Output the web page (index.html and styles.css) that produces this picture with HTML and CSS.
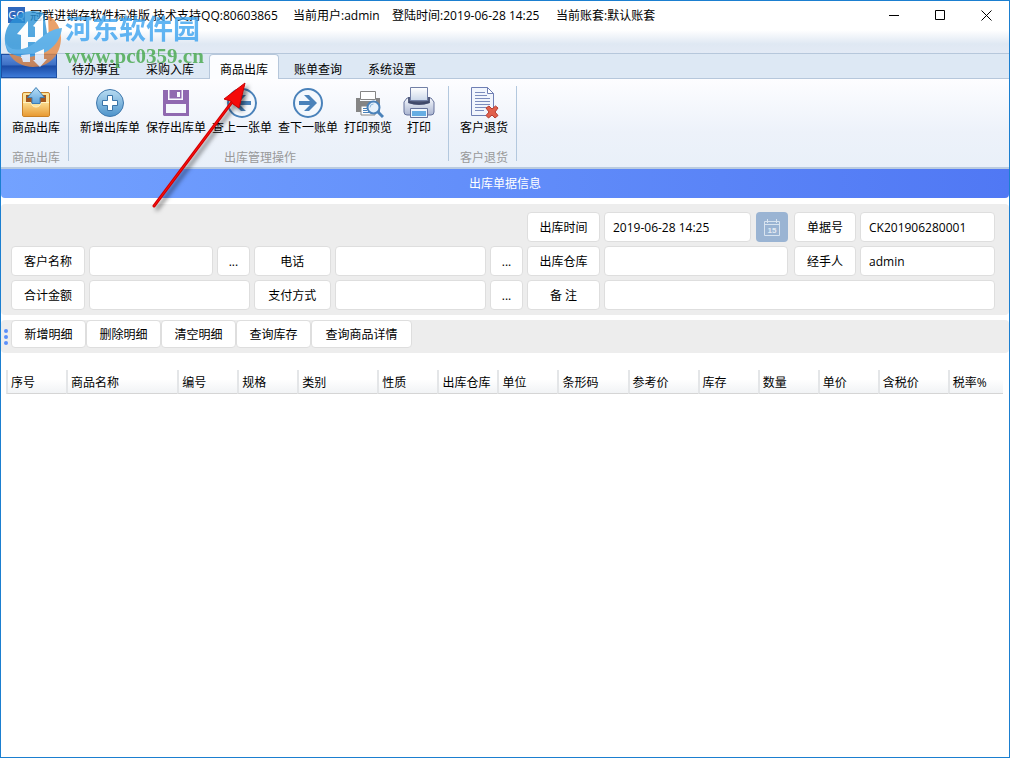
FILE: index.html
```
<!DOCTYPE html>
<html lang="zh-CN">
<head>
<meta charset="utf-8">
<meta name="viewport" content="width=device-width, initial-scale=1">
<title>冠群进销存软件标准版</title>
<link rel="stylesheet" href="styles.css">
</head>
<body>
<div class="window">
  <header class="titlebar">
    <span class="app-icon">GQ</span>
    <div class="title-info">
      <span class="title-name">冠群进销存软件标准版 技术支持QQ:80603865</span>
      <span class="title-user">当前用户:admin</span>
      <span class="title-time">登陆时间:2019-06-28 14:25</span>
      <span>当前账套:默认账套</span>
    </div>
    <div class="window-controls">
      <button class="control" aria-label="最小化"><svg width="11" height="11" viewBox="0 0 11 11"><path d="M0 5.5h10" stroke="#000"/></svg></button>
      <button class="control" aria-label="最大化"><svg width="11" height="11" viewBox="0 0 11 11"><path d="M.5.5h9v9h-9z" fill="none" stroke="#000"/></svg></button>
      <button class="control" aria-label="关闭"><svg width="11" height="11" viewBox="0 0 11 11"><path d="M.5.5l10 10M10.500.5l-10 10" stroke="#000"/></svg></button>
    </div>
  </header>

  <nav class="tabs">
    <button class="app-menu" aria-label="应用菜单"></button>
    <button class="tab">待办事宜</button>
    <button class="tab">采购入库</button>
    <button class="tab tab-active">商品出库</button>
    <button class="tab">账单查询</button>
    <button class="tab">系统设置</button>
  </nav>

  <section class="ribbon">
    <div class="group">
      <div class="items">
        <button class="item">
          <svg class="icon" viewBox="0 0 32 32">
            <defs>
              <linearGradient id="box" x2="0" y2="1"><stop offset="0" stop-color="#fbdc8e"/><stop offset="1" stop-color="#e89a33"/></linearGradient>
              <linearGradient id="up" x2="0" y2="1"><stop offset="0" stop-color="#b9e0f7"/><stop offset="1" stop-color="#5ea2d8"/></linearGradient>
            </defs>
            <rect x="2.500" y="5.500" width="27" height="24" rx="1.500" fill="#fbe29b" stroke="#c98126"/>
            <path d="M6 8h20v8H6z" fill="#a3561c"/>
            <path d="M3 15.500h8c1 6 9 6 10 0h8V29H3z" fill="url(#box)"/>
            <path d="M3 15.500h8c1 6 9 6 10 0h8" fill="none" stroke="#fff2c4"/>
            <path d="M16 .5l8.500 10H20v6h-8v-6H7.500z" fill="url(#up)" stroke="#3f7fb5"/>
          </svg>
          <span>商品出库</span>
        </button>
      </div>
      <div class="caption">商品出库</div>
    </div>
    <div class="group">
      <div class="items">
        <button class="item">
          <svg class="icon" viewBox="0 0 32 32">
            <defs><linearGradient id="add" x2="0" y2="1"><stop offset="0" stop-color="#b8dcf2"/><stop offset="1" stop-color="#4d93ca"/></linearGradient></defs>
            <circle cx="16" cy="16" r="13.500" fill="url(#add)" stroke="#3f78ad"/>
            <path d="M13.500 8.500h5v5h5v5h-5v5h-5v-5h-5v-5h5z" fill="#fff" stroke="#3a74a8"/>
          </svg>
          <span>新增出库单</span>
        </button>
        <button class="item">
          <svg class="icon" viewBox="0 0 32 32">
            <path d="M3 3h26v26H4l-1-1z" fill="#9069b0"/>
            <path d="M8 2h1.500v9.500h12V2H23v11H8z" fill="#f8fafe"/>
            <path d="M17 5h3v5h-3z" fill="#f8fafe"/>
            <path d="M6 17h20v9H6z" fill="#f5f8fc"/>
          </svg>
          <span>保存出库单</span>
        </button>
        <button class="item">
          <svg class="icon" viewBox="0 0 32 32">
            <circle cx="16" cy="16" r="14" fill="#f4f8fd" stroke="#4a82ba" stroke-width="2"/>
            <path d="M7 16l8-8h5l-6 6h11v4H14l6 6h-5z" fill="#4a82ba"/>
          </svg>
          <span>查上一张单</span>
        </button>
        <button class="item">
          <svg class="icon" viewBox="0 0 32 32">
            <circle cx="16" cy="16" r="14" fill="#f4f8fd" stroke="#4a82ba" stroke-width="2"/>
            <path d="M25 16l-8-8h-5l6 6H7v4h11l-6 6h5z" fill="#4a82ba"/>
          </svg>
          <span>查下一账单</span>
        </button>
        <button class="item">
          <svg class="icon" viewBox="0 0 32 32">
            <path d="M4 11h4v3h16v-3h4v14H4z" fill="#858585"/>
            <path d="M8.500 4.500h15v8h-15z" fill="#fff" stroke="#858585"/>
            <path d="M9 19h14v9H9z" fill="#fff" stroke="#858585"/>
            <path d="M11 21.500h5M11 23.500h4M11 25.500h6" stroke="#4a82ba"/>
            <path d="M26 25l5 5" stroke="#4a82ba" stroke-width="3"/>
            <circle cx="21.500" cy="20.500" r="6" fill="#e6f1fb" stroke="#4a82ba" stroke-width="2"/>
            <path d="M18 20.500a3.500 3.500 0 0 1 3.500-3.500" fill="none" stroke="#8db9df"/>
          </svg>
          <span>打印预览</span>
        </button>
        <button class="item">
          <svg class="icon" viewBox="0 0 32 32">
            <defs>
              <linearGradient id="paper" x2="0" y2="1"><stop offset="0" stop-color="#fff"/><stop offset="1" stop-color="#cbd8ea"/></linearGradient>
              <linearGradient id="body" x2="0" y2="1"><stop offset="0" stop-color="#f5f8fd"/><stop offset="1" stop-color="#a9b4d0"/></linearGradient>
            </defs>
            <path d="M4 11h24l3 4v10q0 3-3 3H4q-3 0-3-3V15z" fill="url(#body)" stroke="#66739c"/>
            <path d="M5 10h22v6q-11 4-22 0z" fill="#535d7d"/>
            <path d="M7.500.5h17v13h-17z" fill="url(#paper)" stroke="#7280a6"/>
            <path d="M6 15q10 3 20 0" fill="none" stroke="#3f486a" stroke-width="2"/>
            <path d="M7.500 21.500h17v9h-17z" fill="#eff7fe" stroke="#66739c"/>
            <path d="M9 24h14v5H9z" fill="#65ade3"/>
          </svg>
          <span>打印</span>
        </button>
      </div>
      <div class="caption">出库管理操作</div>
    </div>
    <div class="group">
      <div class="items">
        <button class="item">
          <svg class="icon" viewBox="0 0 32 32">
            <path d="M3.500.5h16l6 6v22h-22z" fill="#f1f5fd" stroke="#6f7fb4"/>
            <path d="M19.500.5v6h6z" fill="#fff" stroke="#6f7fb4"/>
            <path d="M7 5.500h10M7 8.500h12M7 11.500h15M7 14.500h15M7 17.500h15M7 20.500h11M7 23.500h9" stroke="#7c8cbd"/>
            <path d="M18 21l3-2 3 3 3.500-3 2.500 2-3 4 3 3.500-3 2.500-3-3-3.500 3-2.500-2.500 3-3.500z" fill="#e1604c" stroke="#b43c30"/>
          </svg>
          <span>客户退货</span>
        </button>
      </div>
      <div class="caption">客户退货</div>
    </div>
  </section>

  <h1 class="banner">出库单据信息</h1>

  <form class="form">
    <label class="box label time-label" for="time">出库时间</label>
    <input class="box" id="time" value="2019-06-28 14:25">
    <button type="button" class="calendar" aria-label="选择日期">
      <svg width="16" height="17" viewBox="0 0 16 17"><path d="M.5 2.500h15v14H.5zM.5 5.500h15M3.500 0v4M12.500 0v4" fill="none" stroke="#d8e4f0"/><text class="calendar-day" x="8" y="14" text-anchor="middle">15</text></svg>
    </button>
    <label class="box label short-label" for="number">单据号</label>
    <input class="box" id="number" value="CK201906280001">

    <label class="box label first" for="customer">客户名称</label>
    <input class="box" id="customer">
    <button type="button" class="box more">...</button>
    <label class="box label" for="phone">电话</label>
    <input class="box" id="phone">
    <button type="button" class="box more">...</button>
    <label class="box label" for="store">出库仓库</label>
    <input class="box span-2" id="store">
    <label class="box label short-label" for="handler">经手人</label>
    <input class="box" id="handler" value="admin">

    <label class="box label first" for="total">合计金额</label>
    <input class="box span-2" id="total">
    <label class="box label" for="payment">支付方式</label>
    <input class="box" id="payment">
    <button type="button" class="box more">...</button>
    <label class="box label" for="remark">备 注</label>
    <input class="box span-4" id="remark">
  </form>

  <div class="toolbar">
    <svg class="grip" width="6" height="18" viewBox="0 0 6 18"><g fill="#5b8ff9"><circle cx="3" cy="3" r="2"/><circle cx="3" cy="9" r="2"/><circle cx="3" cy="15" r="2"/></g></svg>
    <button class="box tool">新增明细</button>
    <button class="box tool">删除明细</button>
    <button class="box tool">清空明细</button>
    <button class="box tool">查询库存</button>
    <button class="box tool tool-wide">查询商品详情</button>
  </div>

  <main class="details">
    <table class="table">
      <colgroup>
        <col class="w60"><col class="w111"><col class="w60"><col class="w60"><col class="w80"><col class="w60"><col class="w60"><col class="w60"><col class="w70"><col class="w70"><col class="w60"><col class="w60"><col class="w60"><col class="w70"><col class="w55">
      </colgroup>
      <thead>
        <tr><th>序号</th><th>商品名称</th><th>编号</th><th>规格</th><th>类别</th><th>性质</th><th>出库仓库</th><th>单位</th><th>条形码</th><th>参考价</th><th>库存</th><th>数量</th><th>单价</th><th>含税价</th><th>税率%</th></tr>
      </thead>
    </table>
  </main>

  <div class="watermark">
    <svg width="58" height="60" viewBox="0 0 58 60">
      <path d="M29 1A28 28 0 0 0 4 42L12 46 44 30 40 3Q35 1 29 1z" fill="#2b93d8"/>
      <path d="M44 5A28 28 0 0 1 57 28C57 44 46 57 29 57 19 57 10 52 5 44L30 46 45 34z" fill="#e68a45"/>
      <path d="M13 24L24 11v37h-7V25zM29 16L39 4v34h-8V17z" fill="#fff"/>
      <path d="M22 27h10v5H22z" fill="#fff"/>
      <path d="M1 30Q4 42 18 39C34 36 38 20 58 18 56 34 44 45 25 47 11 48 2 43 1 30z" fill="#42a4e6"/>
      <path d="M17 45l9-1v8h-7zM31 43l9-4v10h3l-7 8-7-7h2z" fill="#fff"/>
    </svg>
    <div>
      <div class="watermark-name">河东软件园</div>
      <div class="watermark-url">www.pc0359.cn</div>
    </div>
  </div>

  <svg class="pointer" width="110" height="136" viewBox="0 0 110 136">
    <path d="M6 126L84 22" stroke="#d40000" stroke-width="3" stroke-linecap="round"/>
    <path d="M6 126L84 22" stroke="#ff1010" stroke-width="1" stroke-linecap="round"/>
    <path d="M97 3L76 19l7 2 2 3 6 4z" fill="#f50a0a" stroke="#c00"/>
  </svg>
</div>
</body>
</html>
```
FILE: styles.css
```
* {
  box-sizing: border-box;
}

body {
  margin: 0;
  color: #000;
  font: 12px/16px "Open Sans", "Noto Sans CJK SC", sans-serif;
}

button,
input {
  margin: 0;
  padding: 0;
  border: 0;
  background: none;
  color: inherit;
  font: inherit;
}

.window {
  position: relative;
  display: flex;
  flex-direction: column;
  min-height: 100vh;
  border: 1px solid #1b7fd0;
  background: #fff;
}

/* Title bar */
.titlebar {
  display: flex;
  align-items: flex-start;
  height: 52px;
  padding-left: 7px;
  background: linear-gradient(#fff 29px, #dfe8f3 43px, #e3eaf5);
}

.app-icon {
  width: 17px;
  height: 16px;
  margin: 6px 5px 0 0;
  background: #2f68bd;
  color: #fff;
  font-size: 11px;
  text-align: center;
}

.title-info {
  display: flex;
  flex: 1;
  padding-top: 7px;
  white-space: nowrap;
}

.title-name {
  width: 263px;
}

.title-user {
  width: 99px;
}

.title-time {
  width: 164px;
}

.window-controls {
  display: flex;
}

.control {
  display: flex;
  align-items: center;
  justify-content: center;
  width: 46px;
  height: 28px;
}

/* Tabs */
.tabs {
  display: flex;
  gap: 4px;
  height: 26px;
  border-top: 1px solid #b6c7db;
  border-bottom: 1px solid #b6c7db;
  background: #dde8f4;
}

.app-menu {
  width: 56px;
  height: 24px;
  border: 1px solid #1c4fa5;
  background: linear-gradient(#5f8fdc, #3c6fc4 45%, #1a4aa5 50%, #3d7bd8);
}

.tab {
  width: 70px;
  height: 25px;
  padding-top: 5px;
  border: 1px solid transparent;
  border-bottom: 0;
}

.tab-active {
  border-color: #b6c7db;
  border-radius: 4px 4px 0 0;
  background: #fcfdff;
}

/* Ribbon */
.ribbon {
  display: flex;
  padding: 7px 0 6px;
  border-bottom: 2px solid #b9cbe0;
  background: linear-gradient(#fdfdff, #edf2fa 60%, #e9f0f9);
}

.group {
  display: flex;
  flex-direction: column;
  justify-content: space-between;
  height: 75px;
  padding: 0 5px 0 8px;
  border-right: 1px solid #b3c8de;
}

.items {
  display: flex;
}

.item {
  display: flex;
  flex-direction: column;
  align-items: center;
  gap: 1px;
  min-width: 48px;
  padding: 1px 3px 0;
  white-space: nowrap;
}

.icon {
  width: 32px;
  height: 32px;
}

.caption {
  height: 13px;
  color: #999;
  line-height: 19px;
  text-align: center;
}

/* Document banner */
.banner {
  margin: 0;
  border-radius: 0 0 4px 4px;
  background: linear-gradient(90deg, #73a2ff, #5078f4);
  color: #fff;
  font-size: 12px;
  font-weight: 400;
  line-height: 29px;
  text-align: center;
}

/* Form */
.box {
  min-width: 0;
  padding-top: 2px;
  border: 1px solid #dedede;
  border-radius: 4px;
  background: #fff;
}

.form {
  display: grid;
  grid-template-columns:
    74px minmax(0, 123fr) 33px 77px minmax(0, 150fr) 33px
    73px minmax(0, 146fr) 33px 64px minmax(0, 134fr);
  grid-auto-rows: 30px;
  gap: 4px;
  margin-top: 6px;
  padding: 8px 14px 5px 10px;
  border-radius: 4px;
  background: #ededed;
}

.form input {
  width: 100%;
  padding: 2px 8px 0;
}

.label {
  display: flex;
  align-items: center;
  justify-content: center;
  white-space: pre;
}

.first {
  grid-column: 1;
}

.time-label {
  grid-column: 7;
}

.short-label {
  justify-self: end;
  width: 62px;
}

.span-2 {
  grid-column: span 2;
}

.span-4 {
  grid-column: span 4;
}

.calendar {
  display: flex;
  align-items: center;
  justify-content: center;
  justify-self: end;
  width: 32px;
  border-radius: 4px;
  background: #9ab4d3;
}

.calendar-day {
  fill: #e3ebf4;
  font: bold 8px "Liberation Sans", sans-serif;
}

/* Detail toolbar */
.toolbar {
  display: flex;
  align-items: flex-start;
  height: 33px;
  margin-top: 5px;
  border-radius: 4px;
  background: #ededed;
}

.grip {
  margin: 8px 2px 0;
}

.tool {
  width: 75px;
  height: 28px;
}

.tool-wide {
  width: 101px;
}

/* Detail table */
.details {
  flex: 1;
  padding: 17px 6px 0 5px;
}

.table {
  width: 100%;
  border-collapse: separate;
  border-spacing: 0;
  table-layout: fixed;
}

.table th {
  height: 24px;
  padding: 2px 0 0 3px;
  border-bottom: 1px solid #d5d5d5;
  border-left: 2px solid #e4e6e8;
  background: linear-gradient(#fff 40%, #f1f3f5);
  font-weight: 400;
  text-align: left;
  white-space: nowrap;
}

.w55 { width: 55px; }
.w60 { width: 60px; }
.w70 { width: 70px; }
.w80 { width: 80px; }
.w111 { width: 111px; }

/* Overlays */
.watermark {
  position: absolute;
  top: 9px;
  left: 3px;
  display: flex;
  gap: 3px;
  opacity: 0.8;
  pointer-events: none;
}

.watermark-name {
  color: #3ba3f0;
  font: bold 27px/36px "Noto Sans CJK SC", sans-serif;
}

.watermark-url {
  color: #45a84a;
  font: bold 21px/20px "Liberation Serif", serif;
}

.pointer {
  position: absolute;
  top: 79px;
  left: 147px;
  fill: none;
  filter: drop-shadow(3px 3px 2px rgb(0 0 0 / 50%));
  pointer-events: none;
}
```
